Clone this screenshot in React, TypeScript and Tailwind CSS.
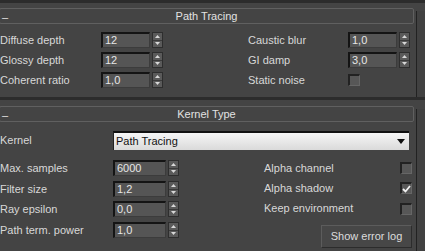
import React from 'react'

const font = { fontFamily: '"Liberation Sans", Arial, sans-serif' }

function Spinner() {
  return (
    <div className="flex h-full w-[11px] flex-col border border-[#2e2e2e] bg-[#5a5a5a]">
      <div className="flex flex-1 items-center justify-center border-b border-[#3a3a3a]">
        <svg width="5" height="3" viewBox="0 0 5 3">
          <path d="M0 3 L2.5 0 L5 3 Z" fill="#d8d8d8" />
        </svg>
      </div>
      <div className="flex flex-1 items-center justify-center">
        <svg width="5" height="3" viewBox="0 0 5 3">
          <path d="M0 0 L5 0 L2.5 3 Z" fill="#d8d8d8" />
        </svg>
      </div>
    </div>
  )
}

function NumField({ value, w }: { value: string; w: string }) {
  return (
    <div className="flex h-[16px] items-stretch gap-[2px]">
      <div
        className={`${w} flex items-center border-t-2 border-l-2 border-r border-b border-t-[#141414] border-l-[#141414] border-r-[#3c3c3c] border-b-[#3c3c3c] bg-[#555555] pl-[2px] text-[11px] leading-none text-[#e6e6e6]`}
      >
        {value}
      </div>
      <Spinner />
    </div>
  )
}

function Check({ checked }: { checked?: boolean }) {
  return (
    <div className="flex h-[12px] w-[12px] items-center justify-center border-t-2 border-l-2 border-r border-b border-t-[#222] border-l-[#222] border-r-[#666] border-b-[#666] bg-[#575757]">
      {checked && (
        <svg width="9" height="8" viewBox="0 0 9 8">
          <path d="M1 4 L3.5 6.5 L8 1" stroke="#f2f2f2" strokeWidth="1.8" fill="none" />
        </svg>
      )}
    </div>
  )
}

function Header({ title }: { title: string }) {
  return (
    <div className="relative -ml-[1px] flex h-[16px] w-[415px] items-center justify-center rounded-[2px] border border-[#606060] text-[11px] text-[#e2e2e2]">
      <span className="absolute left-[2px] top-[0px] text-[11px]">–</span>
      <span>{title}</span>
    </div>
  )
}

function Row({ label, children, lw }: { label: string; children: React.ReactNode; lw: string }) {
  return (
    <div className="flex h-[20px] items-center">
      <div className={`${lw} text-[11px] text-[#d8d8d8]`}>{label}</div>
      {children}
    </div>
  )
}

export default function App() {
  return (
    <div className="flex h-[251px] w-[425px] flex-col overflow-hidden bg-[#444444] text-[11px]" style={font}>
      {/* Path Tracing rollout */}
      <div className="h-[3px] bg-[#2c2c2c]" />
      <div className="flex">
        <div className="flex w-[416px] flex-col pt-[5px]">
          <Header title="Path Tracing" />
          <div className="flex pt-[6px]">
            <div className="flex w-[248px] flex-col">
              <Row label="Diffuse depth" lw="w-[101px]">
                <NumField value="12" w="w-[49px]" />
              </Row>
              <Row label="Glossy depth" lw="w-[101px]">
                <NumField value="12" w="w-[49px]" />
              </Row>
              <Row label="Coherent ratio" lw="w-[101px]">
                <NumField value="1,0" w="w-[49px]" />
              </Row>
            </div>
            <div className="flex flex-col">
              <Row label="Caustic blur" lw="w-[100px]">
                <NumField value="1,0" w="w-[49px]" />
              </Row>
              <Row label="GI damp" lw="w-[100px]">
                <NumField value="3,0" w="w-[49px]" />
              </Row>
              <Row label="Static noise" lw="w-[100px]">
                <Check />
              </Row>
            </div>
          </div>
          <div className="h-[7px]" />
        </div>
        <div className="flex flex-1 pt-[8px]">
          <div className="w-[1px] bg-[#222]" />
          <div className="flex-1 bg-[#414141]" />
        </div>
      </div>

      {/* Kernel Type rollout */}
      <div className="h-[3px] bg-[#2c2c2c]" />
      <div className="flex flex-1">
        <div className="flex w-[416px] flex-col pt-[6px]">
          <Header title="Kernel Type" />
          <div className="mt-[9px] flex h-[19px] items-center">
            <div className="w-[113px] text-[11px] text-[#d8d8d8]">Kernel</div>
            <div className="flex h-[19px] w-[296px] items-center justify-between border-t-2 border-l border-t-[#111] border-l-[#222] bg-gradient-to-b from-[#f6f6f6] to-[#dadada] pl-[2px] pr-[4px] text-[11px] text-[#111]">
              <span>Path Tracing</span>
              <svg width="8" height="5" viewBox="0 0 8 5">
                <path d="M0 0 L8 0 L4 5 Z" fill="#111" />
              </svg>
            </div>
          </div>
          <div className="flex pt-[8px]">
            <div className="flex w-[264px] flex-col">
              <Row label="Max. samples" lw="w-[113px]">
                <NumField value="6000" w="w-[53px]" />
              </Row>
              <div className="h-[1px]" />
              <Row label="Filter size" lw="w-[113px]">
                <NumField value="1,2" w="w-[53px]" />
              </Row>
              <Row label="Ray epsilon" lw="w-[113px]">
                <NumField value="0,0" w="w-[53px]" />
              </Row>
              <div className="h-[1px]" />
              <Row label="Path term. power" lw="w-[113px]">
                <NumField value="1,0" w="w-[53px]" />
              </Row>
            </div>
            <div className="flex w-[148px] flex-col">
              <div className="flex h-[20px] items-center justify-between">
                <span className="text-[#d8d8d8]">Alpha channel</span>
                <Check />
              </div>
              <div className="flex h-[20px] items-center justify-between">
                <span className="text-[#d8d8d8]">Alpha shadow</span>
                <Check checked />
              </div>
              <div className="flex h-[21px] items-center justify-between">
                <span className="text-[#d8d8d8]">Keep environment</span>
                <Check />
              </div>
              <div className="mt-[6px] flex justify-end">
                <button className="h-[23px] w-[91px] border border-t-[#5c5c5c] border-l-[#5c5c5c] border-r-[#2c2c2c] border-b-[#2c2c2c] bg-[#474747] text-[11px] text-[#dcdcdc]">
                  Show error log
                </button>
              </div>
            </div>
          </div>
        </div>
        <div className="flex flex-1 pt-[9px]">
          <div className="w-[1px] bg-[#222]" />
          <div className="flex-1 bg-[#414141]" />
        </div>
      </div>
    </div>
  )
}
